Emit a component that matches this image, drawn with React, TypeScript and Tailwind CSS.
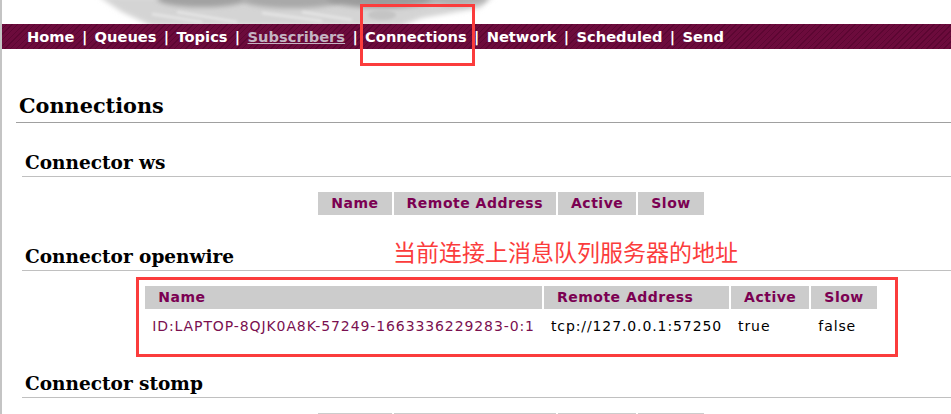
import React from "react";

const navItems = ["Home", "Queues", "Topics", "Subscribers", "Connections", "Network", "Scheduled", "Send"];

function Banner() {
  return (
    <svg width="949" height="24" viewBox="0 0 949 24" className="block">
      <defs>
        <filter id="b3" x="-20%" y="-100%" width="140%" height="300%">
          <feGaussianBlur stdDeviation="2.5" />
        </filter>
        <filter id="b2" x="-20%" y="-100%" width="140%" height="300%">
          <feGaussianBlur stdDeviation="1.5" />
        </filter>
      </defs>
      <polygon points="96,-4 492,-4 478,8 420,18 398,26 150,26 120,12" fill="#d4d4d4" filter="url(#b3)" />
      <ellipse cx="200" cy="-1" rx="45" ry="8" fill="#a2a2a2" filter="url(#b3)" />
      <ellipse cx="290" cy="0" rx="50" ry="8" fill="#a9a9a9" filter="url(#b3)" />
      <ellipse cx="380" cy="-1" rx="55" ry="9" fill="#9c9c9c" filter="url(#b3)" />
      <ellipse cx="455" cy="-2" rx="30" ry="8" fill="#b0b0b0" filter="url(#b3)" />
      <path d="M150 14 L200 22 M175 12 L235 22 M260 13 L320 21 M300 12 L350 20" stroke="#ebebeb" strokeWidth="2" filter="url(#b2)" />
      <ellipse cx="380" cy="15" rx="14" ry="5" fill="#c4c4c4" filter="url(#b2)" />
    </svg>
  );
}

function HeaderCell({ children }: { children: React.ReactNode }) {
  return (
    <th className="bg-[#cccccc] text-[#7b0052] font-bold text-left px-[13px] h-[23px] leading-[23px] text-[14px] tracking-[0.5px] p-0 whitespace-nowrap">
      {children}
    </th>
  );
}

const tdBase = "px-[7px] py-[7px] leading-[17px] text-[14px] tracking-[0.9px] whitespace-nowrap";

function ConnTable({ rows }: { rows: string[][] }) {
  return (
    <table className="mx-auto border-separate border-spacing-[2px] mt-[13px]" style={{ fontFamily: '"DejaVu Sans", Verdana, sans-serif' }}>
      <thead>
        <tr>
          <HeaderCell>Name</HeaderCell>
          <HeaderCell>Remote Address</HeaderCell>
          <HeaderCell>Active</HeaderCell>
          <HeaderCell>Slow</HeaderCell>
        </tr>
      </thead>
      <tbody>
        {rows.map((r, i) => (
          <tr key={i}>
            <td className={`${tdBase} text-[#7a1050]`}>{r[0]}</td>
            <td className={`${tdBase} text-black`}>{r[1]}</td>
            <td className={`${tdBase} text-black`}>{r[2]}</td>
            <td className={`${tdBase} text-black`}>{r[3]}</td>
          </tr>
        ))}
      </tbody>
    </table>
  );
}

function Section({ title, rows }: { title: string; rows: string[][] }) {
  return (
    <div className="mt-[28px]">
      <h2
        className="pl-[3px] leading-[24px] pb-[1px] border-b border-[#c0c0c0] text-[18.5px] font-bold text-black"
        style={{ fontFamily: '"DejaVu Serif", Georgia, serif' }}
      >
        {title}
      </h2>
      <ConnTable rows={rows} />
    </div>
  );
}

export default function App() {
  return (
    <div className="relative w-[951px] h-[414px] overflow-hidden bg-white border-l-2 border-[#c4c4c4]">
      <Banner />
      <nav
        className="h-[25px] flex items-center pl-[25px] text-white font-bold text-[14.67px] bg-[repeating-linear-gradient(135deg,#6c0b3c_0px,#6c0b3c_3px,#5c0632_3px,#5c0632_4px)]"
        style={{ fontFamily: '"DejaVu Sans", Verdana, sans-serif' }}
      >
        {navItems.map((item, i) => (
          <React.Fragment key={item}>
            {i > 0 && <span className="w-[20px] text-center">|</span>}
            <span className={item === "Subscribers" ? "text-[#c4b4c2] underline" : ""}>{item}</span>
          </React.Fragment>
        ))}
      </nav>
      <div className="w-[1100px] pl-[14px]">
        <h1
          className="mt-[43px] w-[990px] pl-[3px] leading-[28px] pb-[2px] border-b border-[#a0a0a0] text-[20.8px] font-bold text-black"
          style={{ fontFamily: '"DejaVu Serif", Georgia, serif' }}
        >
          Connections
        </h1>
        <div className="w-[978px] ml-[6px]">
          <Section title="Connector ws" rows={[]} />
          <Section
            title="Connector openwire"
            rows={[["ID:LAPTOP-8QJK0A8K-57249-1663336229283-0:1", "tcp://127.0.0.1:57250", "true", "false"]]}
          />
          <Section title="Connector stomp" rows={[]} />
        </div>
      </div>

      <div className="absolute left-[358px] top-[4px] w-[115px] h-[62px] border-[3px] border-[#fb3c3c]" />
      <div className="absolute left-[134px] top-[277px] w-[762px] h-[80px] border-[3px] border-[#fb3c3c]" />
      <div
        className="absolute left-[391px] top-[240px] text-[23px] leading-[23px] text-[#fb3c3c] whitespace-nowrap"
        style={{ fontFamily: '"Noto Sans CJK SC", "Noto Sans", sans-serif' }}
      >
        当前连接上消息队列服务器的地址
      </div>
    </div>
  );
}
